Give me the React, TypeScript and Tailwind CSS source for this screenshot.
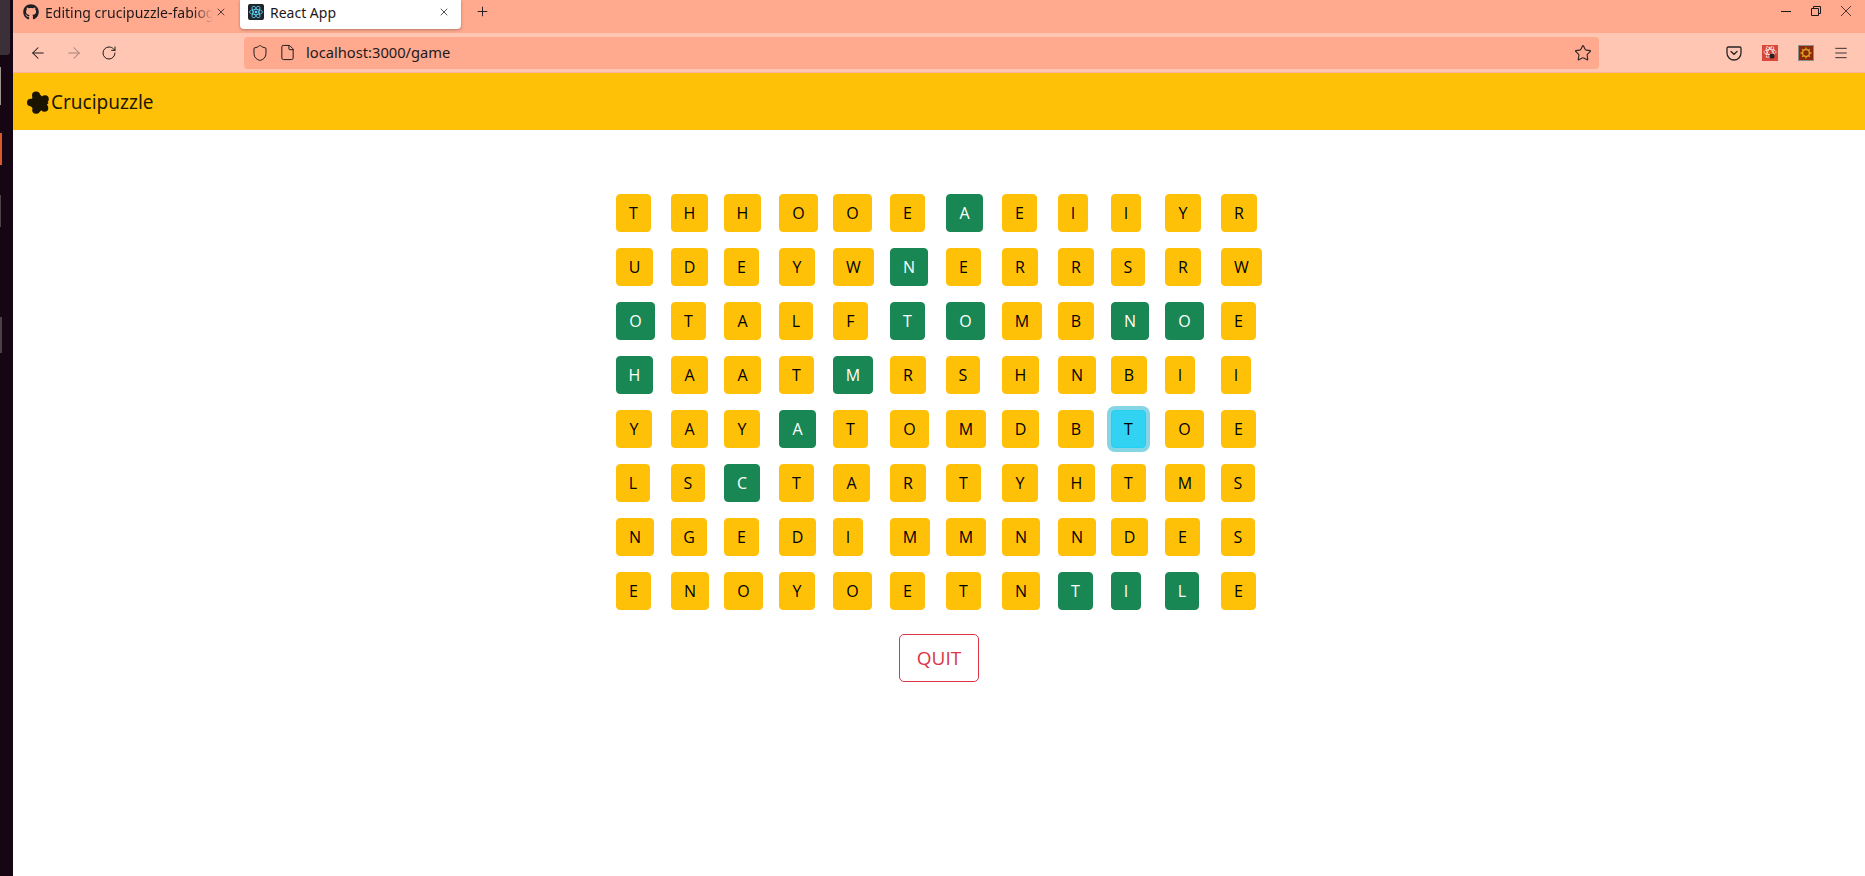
import { FaGithub } from "react-icons/fa";
import { ArrowLeft, ArrowRight, File, Menu, Plus, RotateCw, Shield, Star, X } from "lucide-react";

const rows = [
  "THHOOEAEIIYR",
  "UDEYWNERRSRW",
  "OTALFTOMBNOE",
  "HAATMRSHNBII",
  "YAYATOMDBTOE",
  "LSCTARTYHTMS",
  "NGEDIMMNNDES",
  "ENOYOETNTILE",
];

// cells already found, as row-column
const found = ["0-6", "1-5", "2-0", "2-5", "2-6", "2-9", "2-10", "3-0", "3-4", "4-3", "5-2", "7-8", "7-9", "7-10"];
const selected = "4-9";

const letterWidth: Record<string, string> = {
  A: "w-[37px]",
  B: "w-[36px]",
  C: "w-[36px]",
  D: "w-[37px]",
  E: "w-[35px]",
  F: "w-[35px]",
  G: "w-[36px]",
  H: "w-[37px]",
  I: "w-[30px]",
  L: "w-[34px]",
  M: "w-[40px]",
  N: "w-[38px]",
  O: "w-[39px]",
  R: "w-[36px]",
  S: "w-[34px]",
  T: "w-[35px]",
  U: "w-[37px]",
  W: "w-[41px]",
  Y: "w-[36px]",
};

const Dock = () => (
  <aside className="flex w-[13px] shrink-0 flex-col bg-[#160512]">
    <div className="h-[55px] w-[10px] rounded-br-[3px] bg-[#3b3038]" />
    <div className="mt-[12px] h-[38px] w-[1px] bg-[#9a958f]" />
    <div className="mt-[28px] h-[32px] w-[2px] bg-[#d9582c]" />
    <div className="mt-[30px] h-[32px] w-[1px] bg-[#4a4248]" />
    <div className="mt-[90px] h-[36px] w-[2px] bg-[#4a4248]" />
  </aside>
);

const ReactFavicon = () => (
  <svg width="16" height="16" viewBox="0 0 16 16" className="shrink-0">
    <rect width="16" height="16" rx="2" fill="#20232a" />
    <g fill="none" stroke="#61dafb" strokeWidth="0.8">
      <ellipse cx="8" cy="8" rx="6.5" ry="2.6" />
      <ellipse cx="8" cy="8" rx="6.5" ry="2.6" transform="rotate(60 8 8)" />
      <ellipse cx="8" cy="8" rx="6.5" ry="2.6" transform="rotate(120 8 8)" />
    </g>
    <circle cx="8" cy="8" r="1.3" fill="#61dafb" />
  </svg>
);

const WindowControls = () => (
  <div className="ml-auto mt-[6px] flex items-center gap-[20px] pr-[14px]">
    <svg width="10" height="10" viewBox="0 0 10 10" fill="none" stroke="#1f1a1a">
      <path d="M0 5.500h10" />
    </svg>
    <svg width="10" height="10" viewBox="0 0 10 10" fill="none" stroke="#1f1a1a">
      <path d="M0.500 2.500h7v7h-7zM2.500 2.500v-2h7v7h-2" />
    </svg>
    <svg width="10" height="10" viewBox="0 0 10 10" fill="none" stroke="#1f1a1a" strokeWidth="0.8">
      <path d="M0 0l10 10M10 0L0 10" />
    </svg>
  </div>
);

const TabBar = () => (
  <div className="flex h-[33px] items-start bg-[#ffa98f] text-[14px] text-[#1f1a1a]">
    <div className="flex h-[24px] w-[227px] items-center pl-[10px] pr-[13px]">
      <FaGithub className="size-[16px] shrink-0 text-[#1c2024]" />
      <span className="ml-[6px] w-[168px] overflow-hidden whitespace-nowrap [mask-image:linear-gradient(to_right,black_88%,transparent)]">
        Editing crucipuzzle-fabiog
      </span>
      <X className="ml-auto size-[12px]" strokeWidth={1.5} />
    </div>
    <div className="flex h-[29px] w-[221px] items-start rounded-b-[4px] bg-white pl-[8px] pr-[11px] pt-[4px] shadow-[0_1px_3px_rgba(0,0,0,0.3)]">
      <ReactFavicon />
      <span className="ml-[6px] -mt-[2px] whitespace-nowrap">React App</span>
      <X className="ml-auto mt-[2px] size-[12px]" strokeWidth={1.5} />
    </div>
    <Plus className="ml-[14px] mt-[4px] size-[15px]" strokeWidth={1.5} />
    <WindowControls />
  </div>
);

const PocketIcon = () => (
  <svg width="16" height="16" viewBox="0 0 16 16" fill="none" stroke="#2a2426" strokeWidth="1.3" className="shrink-0">
    <path d="M2.2 2h11.6c.7 0 1.2.5 1.2 1.2V8a7 7 0 0 1-14 0V3.2C1 2.500 1.500 2 2.200 2z" />
    <path d="M5 6.500 8 9.300l3-2.800" strokeLinecap="round" />
  </svg>
);

const ExtensionOne = () => (
  <svg width="16" height="16" viewBox="0 0 16 16" className="shrink-0">
    <rect width="16" height="16" fill="#d9483b" />
    <g fill="none" stroke="#fff" strokeWidth="1" strokeDasharray="1.500 0.700">
      <ellipse cx="8" cy="7" rx="6" ry="2.500" />
      <ellipse cx="8" cy="7" rx="6" ry="2.500" transform="rotate(60 8 7)" />
      <ellipse cx="8" cy="7" rx="6" ry="2.500" transform="rotate(120 8 7)" />
    </g>
    <circle cx="10" cy="11" r="2.600" fill="#2b2020" />
  </svg>
);

const ExtensionTwo = () => (
  <svg width="16" height="16" viewBox="0 0 16 16" className="shrink-0">
    <rect x="0.500" y="0.500" width="15" height="15" fill="#8a2a08" stroke="#8c8c8c" />
    <circle cx="8" cy="8" r="3.500" fill="none" stroke="#d9a021" strokeWidth="1.600" />
    <path d="M8 2.500v2M8 11.500v2M2.500 8h2M11.500 8h2M4.100 4.100l1.400 1.400M10.500 10.500l1.400 1.400M11.900 4.100l-1.400 1.400M5.500 10.500l-1.400 1.400" stroke="#d9a021" strokeWidth="1.300" />
  </svg>
);

const Toolbar = () => (
  <div className="flex h-[40px] items-center border-b border-[#ffb39c] bg-[#ffc6b3] text-[#1f1a1a]">
    <ArrowLeft className="ml-[16px] size-[18px]" strokeWidth={1.4} />
    <ArrowRight className="ml-[18px] size-[18px] opacity-40" strokeWidth={1.4} />
    <RotateCw className="ml-[18px] size-[16px]" strokeWidth={1.5} />
    <div className="ml-[127px] flex h-[32px] w-[1355px] items-center rounded-[4px] bg-[#ffa98f] pl-[7px] pr-[7px]">
      <Shield className="size-[18px]" strokeWidth={1.3} />
      <File className="ml-[10px] size-[17px]" strokeWidth={1.4} />
      <span className="ml-[10px] text-[14.7px]">localhost:3000/game</span>
      <Star className="ml-auto size-[18px] text-[#2e2626]" strokeWidth={1.5} />
    </div>
    <div className="ml-[127px]">
      <PocketIcon />
    </div>
    <div className="ml-[20px]">
      <ExtensionOne />
    </div>
    <div className="ml-[20px]">
      <ExtensionTwo />
    </div>
    <Menu className="ml-[19px] size-[16px]" strokeWidth={1.3} />
  </div>
);

const PuzzleIcon = () => (
  <svg width="22" height="23" viewBox="0 0 22 23" fill="#1a1400" className="shrink-0">
    <rect x="3.500" y="4.500" width="15" height="15" transform="rotate(45 11 12)" />
    <circle cx="9" cy="4.500" r="4" />
    <circle cx="18" cy="8" r="3.800" />
    <circle cx="17.500" cy="17" r="3.800" />
    <circle cx="9" cy="19" r="3.800" />
    <circle cx="3.800" cy="11.500" r="3.800" />
  </svg>
);

const Navbar = () => (
  <nav className="flex h-[57px] items-center bg-[#ffc107] pl-[14px] pt-[1px] text-[19px] text-black/90">
    <PuzzleIcon />
    <span className="ml-[2px]">Crucipuzzle</span>
  </nav>
);

const LetterButton = ({ letter, cell }: { letter: string; cell: string }) => {
  let color = "bg-[#ffc107] border-[#ffc107] text-black";
  if (found.includes(cell)) color = "bg-[#198754] border-[#198754] text-white";
  if (cell === selected) color = "bg-[#31d2f2] border-[#25cff2] text-black shadow-[0_0_0_4px_rgba(11,172,204,0.5)]";

  return (
    <button className={`h-[38px] rounded-[4px] border text-center font-['Open_Sans',sans-serif] text-[16px] ${letterWidth[letter]} ${color}`}>
      {letter}
    </button>
  );
};

const Board = () => (
  <div className="grid w-fit grid-cols-[55px_53px_55px_54px_57px_56px_56px_56px_53px_54px_56px_41px] gap-y-[16px]">
    {rows.map((row, r) =>
      row.split("").map((letter, c) => (
        <div key={`${r}-${c}`}>
          <LetterButton letter={letter} cell={`${r}-${c}`} />
        </div>
      ))
    )}
  </div>
);

export default function App() {
  return (
    <div className="flex h-screen overflow-hidden bg-white font-['Noto_Sans',sans-serif]">
      <Dock />
      <div className="flex min-w-0 flex-1 flex-col">
        <TabBar />
        <Toolbar />
        <Navbar />
        <main className="flex flex-col items-center pt-[64px]">
          <Board />
          <button className="mt-[24px] h-[48px] w-[80px] rounded-[5px] border border-[#dc3545] font-['Open_Sans',sans-serif] text-[19px] text-[#dc3545]">
            QUIT
          </button>
        </main>
      </div>
    </div>
  );
}
